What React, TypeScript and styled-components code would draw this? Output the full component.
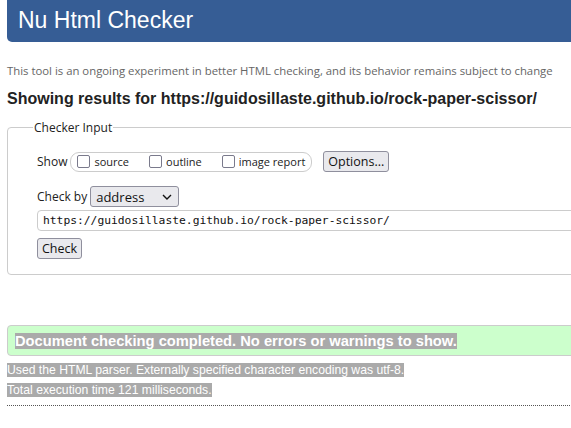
import React from "react";
import styled, { createGlobalStyle } from "styled-components";

const Global = createGlobalStyle`
  html, body { margin: 0; padding: 0; background: #fff; overflow: hidden; }
  body { font-family: "Open Sans", "Noto Sans", sans-serif; color: #222; }
`;

const Page = styled.div`
  width: 720px;
  padding: 0 0 0 7px;
  box-sizing: border-box;
`;

const Header = styled.h1`
  margin: 0;
  height: 42px;
  background: #365d95;
  border-bottom-left-radius: 5px;
  color: #fff;
  font-family: "Liberation Sans", Arial, sans-serif;
  font-weight: normal;
  font-size: 23px;
  line-height: 40px;
  padding-left: 11px;
`;

const Intro = styled.p`
  margin: 21px 0 0;
  font-size: 11.35px;
  line-height: 16px;
  color: #666;
`;

const ResultsFor = styled.h2`
  margin: 10px 0 0;
  font-family: "Liberation Sans", Arial, sans-serif;
  font-weight: bold;
  font-size: 16px;
  line-height: 20px;
  color: #222;
`;

const Fieldset = styled.fieldset`
  margin: 10px 0 0;
  border: 1px solid #ccc;
  border-radius: 4px;
  padding: 15px 29px 15px;
  font-size: 12px;
`;

const Legend = styled.legend`
  padding: 0 1px;
  margin-left: -4px;
  font-size: 12px;
  color: #222;
`;

const Row = styled.div<{ mt?: number }>`
  display: flex;
  align-items: center;
  gap: 3px;
  height: 21px;
  margin-top: ${(p) => p.mt ?? 0}px;
`;

const Pill = styled.div`
  display: flex;
  align-items: center;
  gap: 20px;
  border: 1px solid #ccc;
  border-radius: 9px;
  height: 18px;
  padding: 0 6px 0 6px;
`;

const CheckLabel = styled.label`
  display: flex;
  align-items: center;
  gap: 4px;
  font-size: 11px;
`;

const Box = styled.span`
  display: inline-block;
  width: 11px;
  height: 11px;
  border: 1px solid #7a7a8c;
  border-radius: 2px;
  background: #fff;
`;

const Button = styled.button<{ ml?: number }>`
  font-family: "Open Sans", "Noto Sans", sans-serif;
  font-size: 12.5px;
  color: #111;
  background: #e9e9ed;
  border: 1px solid #8f8f9d;
  border-radius: 3px;
  height: 21px;
  padding: 0 4px;
  margin-left: ${(p) => p.ml ?? 0}px;
`;

const Select = styled.div`
  display: flex;
  align-items: center;
  justify-content: space-between;
  width: 89px;
  height: 21px;
  box-sizing: border-box;
  background: #e9e9ed;
  border: 1px solid #8f8f9d;
  border-radius: 3px;
  padding: 0 6px 0 5px;
  font-size: 13px;
  color: #111;
`;

const UrlInput = styled.div`
  margin-top: 3px;
  height: 21px;
  box-sizing: border-box;
  border: 1px solid #ccc;
  border-radius: 4px;
  font-family: "DejaVu Sans Mono", "Liberation Mono", monospace;
  font-size: 11.3px;
  line-height: 19px;
  padding-left: 5px;
  color: #111;
`;

const Success = styled.div`
  margin-top: 50px;
  height: 31px;
  box-sizing: border-box;
  background: #ccffcc;
  border: 1px solid #ccc;
  border-radius: 4px;
  display: flex;
  align-items: center;
  padding-left: 7px;
`;

const Hl = styled.span<{ size: number; bold?: boolean }>`
  background: #aaaaaa;
  color: #fff;
  font-family: "Liberation Sans", Arial, sans-serif;
  font-size: ${(p) => p.size}px;
  font-weight: ${(p) => (p.bold ? "bold" : "normal")};
`;

const Info = styled.p<{ mt: number }>`
  margin: ${(p) => p.mt}px 0 0;
  line-height: 16px;
  height: 16px;
`;

const Dotted = styled.hr`
  margin: 9px 0 0;
  border: 0;
  border-top: 1px dotted #555;
`;

export default function App() {
  return (
    <>
      <Global />
      <Page>
        <Header>Nu Html Checker</Header>
        <Intro>
          This tool is an ongoing experiment in better HTML checking, and its behavior remains subject to change
        </Intro>
        <ResultsFor>Showing results for https://guidosillaste.github.io/rock-paper-scissor/</ResultsFor>
        <Fieldset>
          <Legend>Checker Input</Legend>
          <Row>
            <span>Show</span>
            <Pill>
              <CheckLabel><Box />source</CheckLabel>
              <CheckLabel><Box />outline</CheckLabel>
              <CheckLabel><Box />image report</CheckLabel>
            </Pill>
            <Button ml={8}>Options...</Button>
          </Row>
          <Row mt={14}>
            <span>Check by</span>
            <Select>
              <span>address</span>
              <svg width="10" height="6" viewBox="0 0 10 6">
                <path d="M1 1l4 4 4-4" stroke="#111" strokeWidth="1.4" fill="none" />
              </svg>
            </Select>
          </Row>
          <UrlInput>https://guidosillaste.github.io/rock-paper-scissor/</UrlInput>
          <Row mt={7}>
            <Button>Check</Button>
          </Row>
        </Fieldset>
        <Success>
          <Hl size={14.7} bold>Document checking completed. No errors or warnings to show.</Hl>
        </Success>
        <Info mt={4}><Hl size={12.2}>Used the HTML parser. Externally specified character encoding was utf-8.</Hl></Info>
        <Info mt={4}><Hl size={12.2}>Total execution time 121 milliseconds.</Hl></Info>
        <Dotted />
      </Page>
    </>
  );
}
